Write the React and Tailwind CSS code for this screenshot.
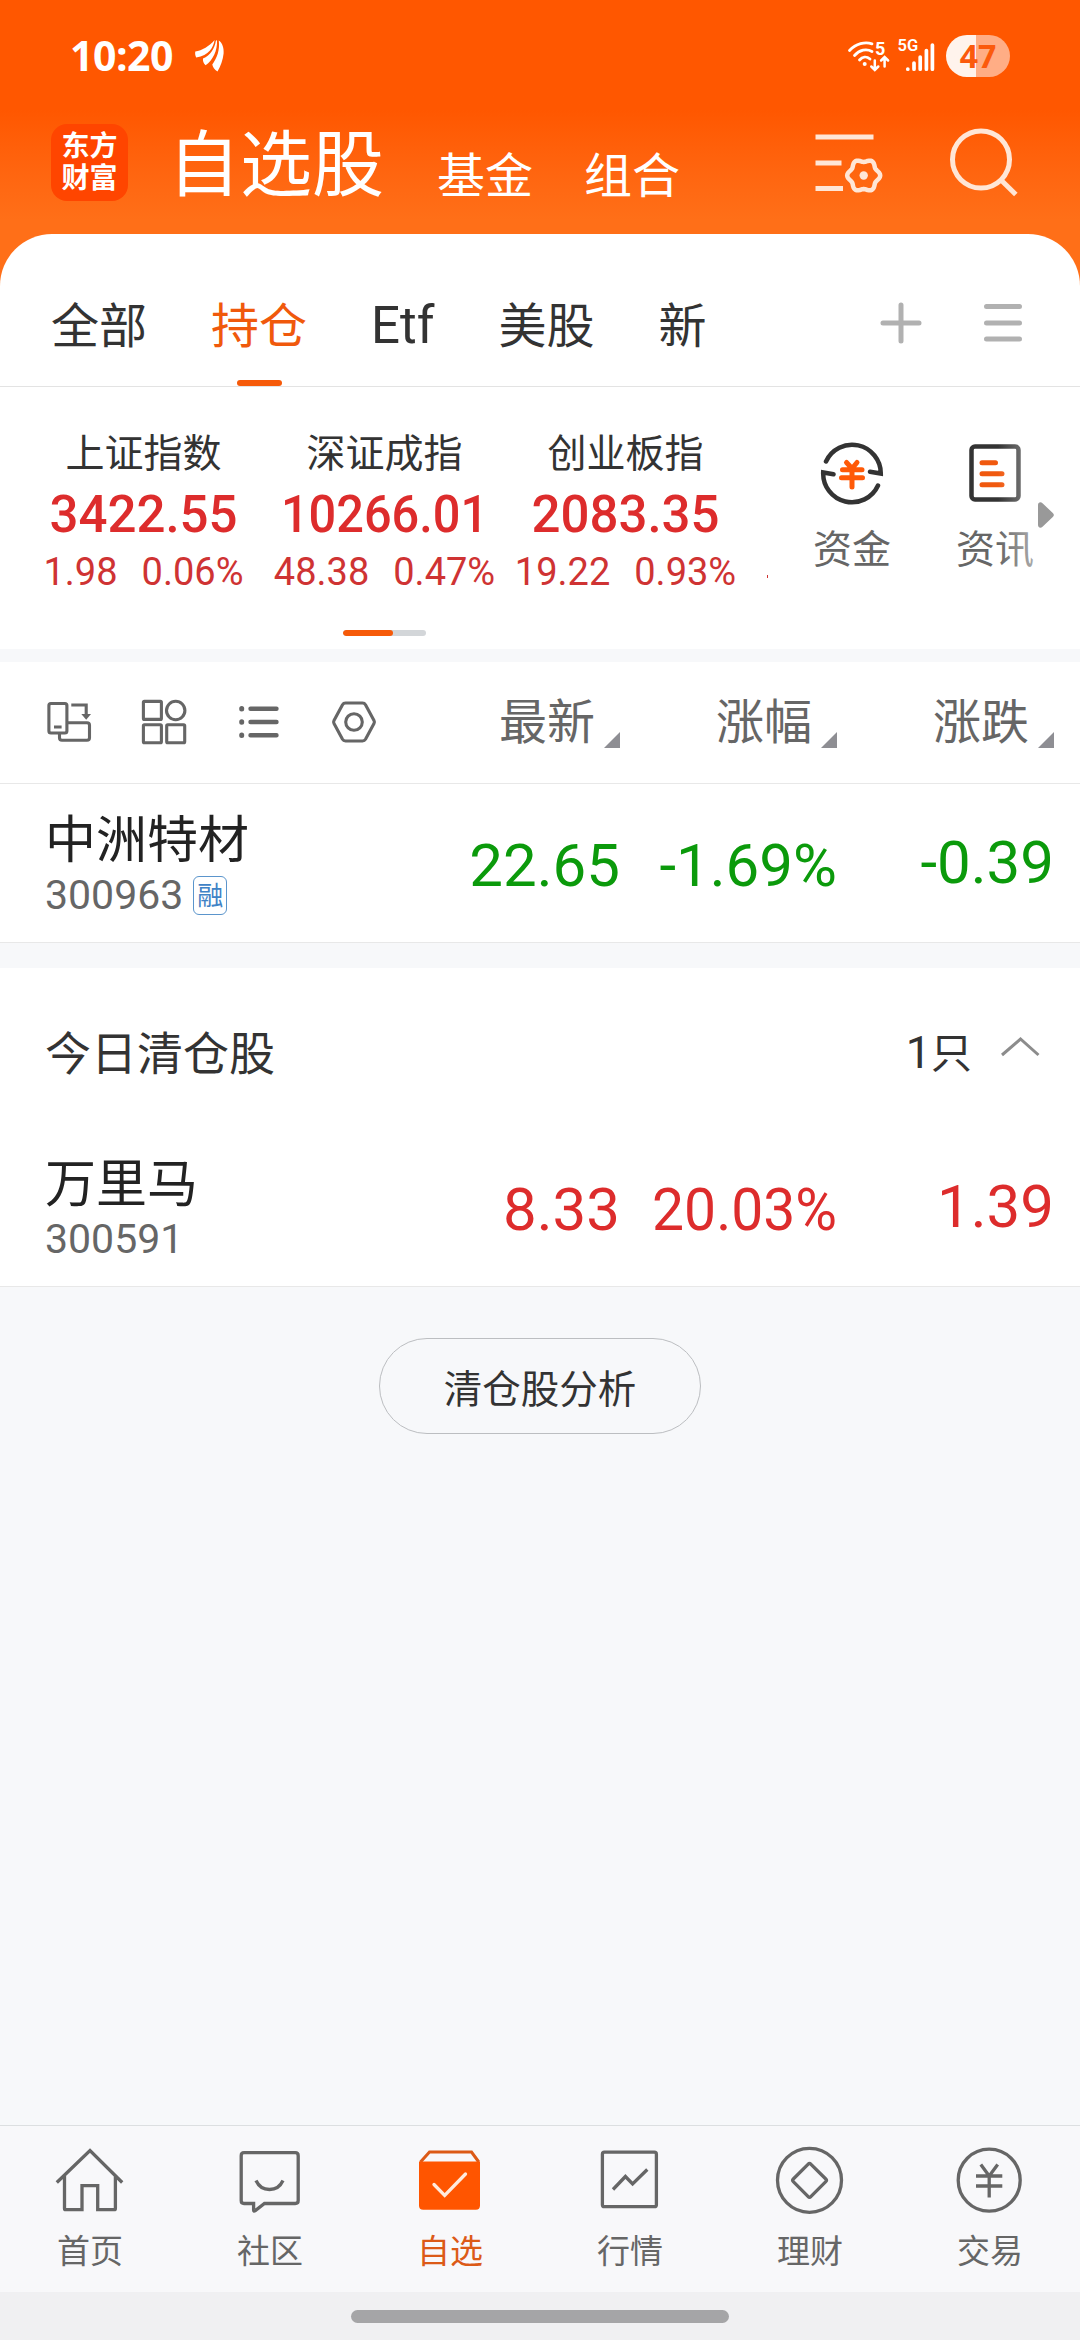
const tabs = ['全部', '持仓', 'Etf', '美股', '新']

const indices = [
  { name: '上证指数', value: '3422.55', change: '1.98', percent: '0.06%' },
  { name: '深证成指', value: '10266.01', change: '48.38', percent: '0.47%', condensed: true },
  { name: '创业板指', value: '2083.35', change: '19.22', percent: '0.93%' },
]

const columns = ['最新', '涨幅', '涨跌']

const holding = { name: '中洲特材', code: '300963', tag: '融', price: '22.65', percent: '-1.69%', change: '-0.39' }
const cleared = { name: '万里马', code: '300591', price: '8.33', percent: '20.03%', change: '1.39', condensed: true }

// six-lobed cog outline around (57.7, 54.5)
const cogPoints = Array.from({ length: 72 }, (_, i) => {
  const a = (i * Math.PI) / 36
  const r = 15 + 1.5 * Math.cos(6 * a)
  return `${(57.7 + r * Math.cos(a)).toFixed(2)},${(54.5 + r * Math.sin(a)).toFixed(2)}`
}).join(' ')

function StatusBar() {
  return (
    <div className="flex h-[111px] items-center pl-[70px] pr-[70px]">
      <span className="font-['Open_Sans'] text-[41px] font-bold leading-none tracking-[-0.5px]">10:20</span>
      <svg className="ml-5 h-9 w-9" viewBox="0 0 36 36" fill="currentColor">
        <path d="M2.3 13.6C9 12.5 16.5 8 21.6 2C20.5 9 16 18 3.2 19.4C2 17.5 2 15 2.3 13.6Z" />
        <path d="M24 2C24.5 13 20 22 12.6 27.3C10.5 25.5 9.6 23 10 20.6C17.5 17.5 21.8 10 22.8 3Z" />
        <path d="M25.8 2.5C29.5 5 31 10 30.6 15.5C30 22 27.5 28.5 24.5 33.5C21.5 31.5 19.6 29 19.3 26.5C24 20 27 12 25.8 2.5Z" />
      </svg>
      <div className="ml-auto flex items-center">
        <svg className="h-9 w-12" viewBox="0 0 48 36" fill="none" stroke="currentColor" strokeWidth="2.8" strokeLinecap="round">
          <path d="M4.5 12.5C11 5.5 20 3.5 27 5.8M9.5 17.5C14.5 11.8 21.5 10.500 27 13.5M14.5 22C17.5 18.5 21.5 18 25 21" />
          <circle cx="19.7" cy="26" r="2" fill="currentColor" stroke="none" />
          <path d="M29.8 22.5V31M26.3 28.5L29.8 32L33.3 28.5M39.6 28.5V20M36.1 22.5L39.6 19L43.1 22.5" strokeWidth="2.5" />
          <text x="30" y="16.5" fontSize="18" fontWeight="700" fontFamily="Roboto" fill="currentColor" stroke="none">5</text>
        </svg>
        <svg className="ml-0.5 h-9 w-[42px] overflow-visible" viewBox="0 0 42 36" fill="none" stroke="currentColor" strokeWidth="3.7" strokeLinecap="round">
          <text x="2.5" y="13" fontSize="16.5" fontWeight="600" fontFamily="Roboto" fill="currentColor" stroke="none">5G</text>
          <path d="M12.8 31V31.2M19 25V31.2M25.2 19V31.2M31.4 12.5V31.2M37.4 7V31.2" />
        </svg>
        <div className="ml-[9px] flex h-[42px] w-16 items-center justify-center rounded-full bg-linear-to-r from-[#fff3ec] from-47% to-[#ffad85] to-47% font-['Open_Sans'] text-[32px] font-bold leading-none text-[#fb5a0c]">
          47
        </div>
      </div>
    </div>
  )
}

function TitleBar() {
  return (
    <div className="flex h-[103px] items-center pl-[51px] pr-[46px]">
      <div className="flex size-[77px] flex-col items-center justify-center rounded-[16px] bg-[#ff4500] pt-px text-[28px] font-bold leading-8">
        <span>东方</span>
        <span>财富</span>
      </div>
      <span className="ml-10 mt-1.5 text-[72px] leading-none">自选股</span>
      <span className="ml-[53px] mt-7 text-[48px] leading-none">基金</span>
      <span className="ml-[51px] mt-7 text-[48px] leading-none">组合</span>
      <svg className="ml-auto size-[84px] text-[#ffe6d6]" viewBox="0 0 84 84" fill="none" stroke="currentColor" strokeWidth="5">
        <path d="M9.5 16H67.5M9.5 42H35.5M9.5 67.5H37" />
        <polygon points={cogPoints} strokeWidth="4.5" strokeLinejoin="round" />
        <circle cx="57.7" cy="54.5" r="4.2" fill="currentColor" stroke="none" />
      </svg>
      <svg className="ml-[60px] size-[84px] text-[#ffe6d6]" viewBox="0 0 84 84" fill="none" stroke="currentColor" strokeWidth="5">
        <circle cx="31" cy="38.5" r="28.5" />
        <path d="M51.5 59.5L65.8 73.5" />
      </svg>
    </div>
  )
}

function TabBar() {
  return (
    <div className="flex h-[153px] border-b border-[#e3e3e3] pl-[51px] pr-[53px]">
      <div className="flex gap-16">
        {tabs.map((tab) => (
          <div key={tab} className="flex flex-col items-center">
            <span
              className={
                tab === '持仓'
                  ? 'mt-[68px] text-[48px] leading-[50px] text-[#f0590c]'
                  : tab === 'Etf'
                    ? 'mt-[67px] text-[51px] leading-[50px]'
                    : 'mt-[68px] text-[48px] leading-[50px]'
              }
            >
              {tab}
            </span>
            {tab === '持仓' && <span className="mt-auto h-1.5 w-[45px] rounded-full bg-[#f65a09]" />}
          </div>
        ))}
      </div>
      <div className="ml-auto mt-[65px] flex gap-[54px] text-[#b1b1b1]">
        <svg className="size-12" viewBox="0 0 48 48" stroke="currentColor" strokeWidth="5" strokeLinecap="round">
          <path d="M6 24H42M24 6V42" />
        </svg>
        <svg className="size-12" viewBox="0 0 48 48" stroke="currentColor" strokeWidth="5" strokeLinecap="round">
          <path d="M7.5 7.5H40.5M7.5 24H40.5M7.5 40H40.5" />
        </svg>
      </div>
    </div>
  )
}

function IndexStrip() {
  return (
    <div className="flex h-[262px]">
      <div className="w-[768px]">
        <div className="flex h-[249px] flex-col">
          <div className="flex pl-[23px] pt-[42px]">
            {indices.map((item) => (
              <div key={item.name} className="flex w-[241px] shrink-0 flex-col items-center whitespace-nowrap text-[#dd2c2c]">
                <span className="text-[39px] leading-[50px] text-[#333]">{item.name}</span>
                <span
                  className={
                    item.condensed
                      ? 'mt-2 scale-x-[0.955] text-[51px] font-medium leading-[56px]'
                      : 'mt-2 text-[51px] font-medium leading-[56px]'
                  }
                >
                  {item.value}
                </span>
                <div className="mt-[7px] flex gap-6 text-[38px] leading-[44px] text-[#cf3333]">
                  <span>{item.change}</span>
                  <span>{item.percent}</span>
                </div>
              </div>
            ))}
            {/* edge of the next index, cut off by the scroller */}
            <span className="ml-[21px] mt-[146px] h-[3px] w-px bg-[#cf3333]" />
          </div>
          <div className="ml-[343px] mt-auto h-1.5 w-[83px] overflow-hidden rounded-full bg-[#d3d6d9]">
            <div className="h-full w-[50px] rounded-full bg-[#f65a09]" />
          </div>
        </div>
      </div>
      <div className="relative flex flex-1 text-[39px] leading-[44px] text-[#666]">
        <div className="ml-[45px] flex flex-col items-center pt-[54px]">
          <svg className="size-16" viewBox="0 0 64 64" fill="none" stroke="#333" strokeWidth="4.5" strokeLinecap="round">
            <path d="M6 20.5A28.7 28.7 0 0 1 60.8 32.5L50 30.8" />
            <path d="M58 44.5A28.7 28.7 0 0 1 3.2 31.5L13.5 33.3" />
            <path d="M26.5 21.5L32 27.5L37 21.5M22.5 28.7H42M21.5 36.7H42.5M32 28V46" stroke="#ff5a08" strokeWidth="5" />
          </svg>
          <span className="mt-[23px]">资金</span>
        </div>
        <div className="ml-[65px] flex flex-col items-center pt-[54px]">
          <svg className="size-16" viewBox="0 0 64 64" fill="none" stroke="#333" strokeWidth="4.5" strokeLinecap="round">
            <rect x="8.5" y="5.5" width="47" height="53" rx="3.5" />
            <path d="M19 21.7H32.5M19 32.7H39M19 43.7H39" stroke="#f0590f" strokeWidth="5" />
          </svg>
          <span className="mt-[23px]">资讯</span>
        </div>
        <div className="absolute right-[42px] top-10 h-40 w-10 bg-linear-to-r from-white/0 to-white/50" />
        <svg className="absolute right-[26px] top-[114px] h-7 w-4" viewBox="0 0 16 28" fill="#999">
          <path d="M0 4C0 1.5 2.5 0.5 4.5 2.2L14.8 12C16.2 13.2 16.2 14.8 14.8 16L4.5 25.8C2.5 27.5 0 26.5 0 24Z" />
        </svg>
      </div>
    </div>
  )
}

function ListHeader() {
  return (
    <div className="flex h-[122px] items-center border-b border-[#e8e8e8] bg-white pl-[45px] pr-[26px] text-[#666]">
      <div className="-mt-px flex gap-[47px]">
        <svg className="size-12" viewBox="0 0 48 48" fill="none" stroke="currentColor" strokeWidth="3.1">
          <rect x="3.9" y="5.5" width="18" height="29.5" rx="2" />
          <path d="M9 29H16.6M22.5 24.7H42Q44.5 24.7 44.5 27.2V39.8Q44.5 42.3 42 42.3H17Q14.5 42.3 14.5 39.8V35M26.3 7H41.2V17" />
          <path d="M36.3 16H46L41.2 21.8Z" fill="currentColor" stroke="none" />
        </svg>
        <svg className="size-12" viewBox="0 0 48 48" fill="none" stroke="currentColor" strokeWidth="3.1">
          <rect x="3.4" y="3.4" width="18" height="18" rx="1" />
          <circle cx="35.7" cy="12.5" r="9.2" />
          <rect x="3.4" y="26.7" width="18" height="18" rx="1" />
          <rect x="26.7" y="26.7" width="18" height="18" rx="1" />
        </svg>
        <svg className="size-12" viewBox="0 0 48 48" fill="none" stroke="currentColor" strokeWidth="4.4" strokeLinecap="round">
          <path d="M15.5 10.7H41.5M15.5 24H41.5M15.5 37.3H41.5" />
          <path d="M6.7 10.5V10.9M6.7 23.8V24.2M6.7 37.1V37.5" strokeWidth="5" />
        </svg>
        <svg className="size-12" viewBox="0 0 48 48" fill="none" stroke="currentColor" strokeWidth="3.1" strokeLinejoin="round">
          <path d="M15.5 5H32.5Q34.5 5 35.5 6.7L44 22.5Q44.8 24 44 25.5L35.5 41.3Q34.5 43 32.5 43H15.5Q13.5 43 12.5 41.3L4 25.5Q3.2 24 4 22.5L12.5 6.7Q13.5 5 15.5 5Z" />
          <circle cx="24" cy="24" r="8.3" />
        </svg>
      </div>
      <div className="ml-auto flex">
        {columns.map((col) => (
          <div key={col} className="flex w-[217px] items-end justify-end">
            <span className="text-[48px] leading-[50px]">{col}</span>
            <svg className="ml-[9px] size-4" viewBox="0 0 16 16" fill="#8e8e93">
              <path d="M16 0V16H0Z" />
            </svg>
          </div>
        ))}
      </div>
    </div>
  )
}

function StockRow({ stock, color }) {
  return (
    <div className="flex h-[159px] border-b border-[#e8e8e8] bg-white pl-[45px] pr-[26px]">
      <div className="pt-[31px]">
        <div className="text-[51px] leading-[52px] text-[#222]">{stock.name}</div>
        <div className="mt-1 flex items-center text-[41px] leading-[48px] text-[#666]">
          {stock.code}
          {stock.tag && (
            <span className="ml-2.5 mt-px flex h-[39px] w-[34px] items-center justify-center rounded-md border border-[#5b95cc] text-[26px] leading-none text-[#3f83c6]">
              {stock.tag}
            </span>
          )}
        </div>
      </div>
      <div className={`ml-auto flex pt-[47px] text-right text-[60px] leading-[70px] ${color}`}>
        <span className="w-[217px]">{stock.price}</span>
        <span className={stock.condensed ? 'w-[217px] origin-right scale-x-[0.95]' : 'w-[217px]'}>{stock.percent}</span>
        <span className="-mt-[3px] w-[217px]">{stock.change}</span>
      </div>
    </div>
  )
}

const navItems = [
  {
    label: '首页',
    icon: <path d="M2.8 37.5L36 5.5L68.2 37.5M10.5 31V63.5Q10.5 64.7 11.7 64.7H28V40.7H43.7V64.7H60.2Q61.4 64.7 61.4 63.5V31" />,
  },
  {
    label: '社区',
    icon: (
      <>
        <path d="M10 7.7H61.2Q64.2 7.7 64.2 10.7V55.5Q64.2 58.5 61.2 58.5H30.5L21 65.8Q19.6 66.5 19.6 65V58.5H10Q7.2 58.5 7.2 55.5V10.7Q7.2 7.7 10 7.7Z" />
        <path d="M22 35.5C27.5 47.5 43.5 47.5 49 35.5" />
      </>
    ),
  },
  {
    label: '自选',
    active: true,
    icon: (
      <>
        <path d="M6.5 17L15.5 7H57.5L64.8 17" strokeWidth="3" />
        <path d="M5 16.5H66V60.5Q66 64.7 61.8 64.7H9.2Q5 64.7 5 60.5Z" fill="#ff5500" stroke="none" />
        <path d="M20 39.5L30.7 50.5L51.5 29" stroke="#ffeadd" strokeLinecap="round" />
      </>
    ),
  },
  {
    label: '行情',
    icon: (
      <>
        <rect x="8.4" y="7.2" width="54" height="54.5" rx="2" />
        <path d="M19 44.5L31.4 31.5L38.6 39L53.3 24.5" />
      </>
    ),
  },
  {
    label: '理财',
    icon: (
      <>
        <circle cx="35.5" cy="35.3" r="32" />
        <path d="M34.2 19.2Q35.5 17.8 36.8 19.2L51.8 34Q53.1 35.3 51.8 36.6L36.8 51.6Q35.5 53 34.2 51.6L19.3 36.6Q18 35.3 19.3 34Z" />
      </>
    ),
  },
  {
    label: '交易',
    icon: (
      <>
        <circle cx="35.2" cy="35.2" r="31" />
        <path d="M26.8 19.5L35.2 31L43.7 19.5M22 31H48.3M22 41H48.3M35.2 31V52.5" />
      </>
    ),
  },
]

function BottomNav() {
  return (
    <div className="mt-auto">
      <div className="flex h-[167px] border-t border-[#dcdfe1] bg-[#f8f8fa]">
        {navItems.map((item) => (
          <div
            key={item.label}
            className={`flex flex-1 flex-col items-center pt-[19px] ${item.active ? 'text-[#dc5a17]' : 'text-[#666]'}`}
          >
            <svg className="size-[72px]" viewBox="0 0 72 72" fill="none" stroke="currentColor" strokeWidth="3.3">
              {item.icon}
            </svg>
            <span className="mt-[17px] text-[33px] leading-9">{item.label}</span>
          </div>
        ))}
      </div>
      <div className="flex h-12 justify-center bg-[#f0f0f2] pt-[18px]">
        <div className="h-[13px] w-[378px] rounded-full bg-[#a5a5a7]" />
      </div>
    </div>
  )
}

export default function App() {
  return (
    <div className="flex h-[2340px] w-[1080px] flex-col overflow-hidden bg-[#f7f8fa] font-[Roboto,'Noto_Sans_CJK_SC',sans-serif] text-[#333]">
      <header className="h-[286px] bg-linear-to-b from-[#ff5700] from-[110px] to-[#ff6f18] to-[220px] text-white">
        <StatusBar />
        <TitleBar />
      </header>

      <div className="-mt-[52px] rounded-t-[52px] bg-white">
        <TabBar />
        <IndexStrip />
      </div>

      <div className="mt-[13px]">
        <ListHeader />
        <StockRow stock={holding} color="text-[#0b9a0b]" />
      </div>

      <div className="mt-[25px] bg-white">
        <div className="flex h-40 pl-[45px] pr-10">
          <span className="mt-[61px] text-[46px] leading-[50px]">今日清仓股</span>
          <span className="ml-auto mt-[60px] text-[41px] leading-[50px]">
            <span className="text-[45px]">1</span>只
          </span>
          <svg className="ml-7 mt-[67px] h-6 w-10" viewBox="0 0 40 24" fill="none" stroke="#8c8c8c" strokeWidth="3">
            <path d="M2 20L20.5 4L38.5 20" />
          </svg>
        </div>
        <StockRow stock={cleared} color="text-[#dd2c2c]" />
      </div>

      <button className="mx-auto mt-[51px] h-24 w-[322px] rounded-full border border-[#bcbec1] pt-2 text-[38.5px] leading-none">
        清仓股分析
      </button>

      <BottomNav />
    </div>
  )
}
